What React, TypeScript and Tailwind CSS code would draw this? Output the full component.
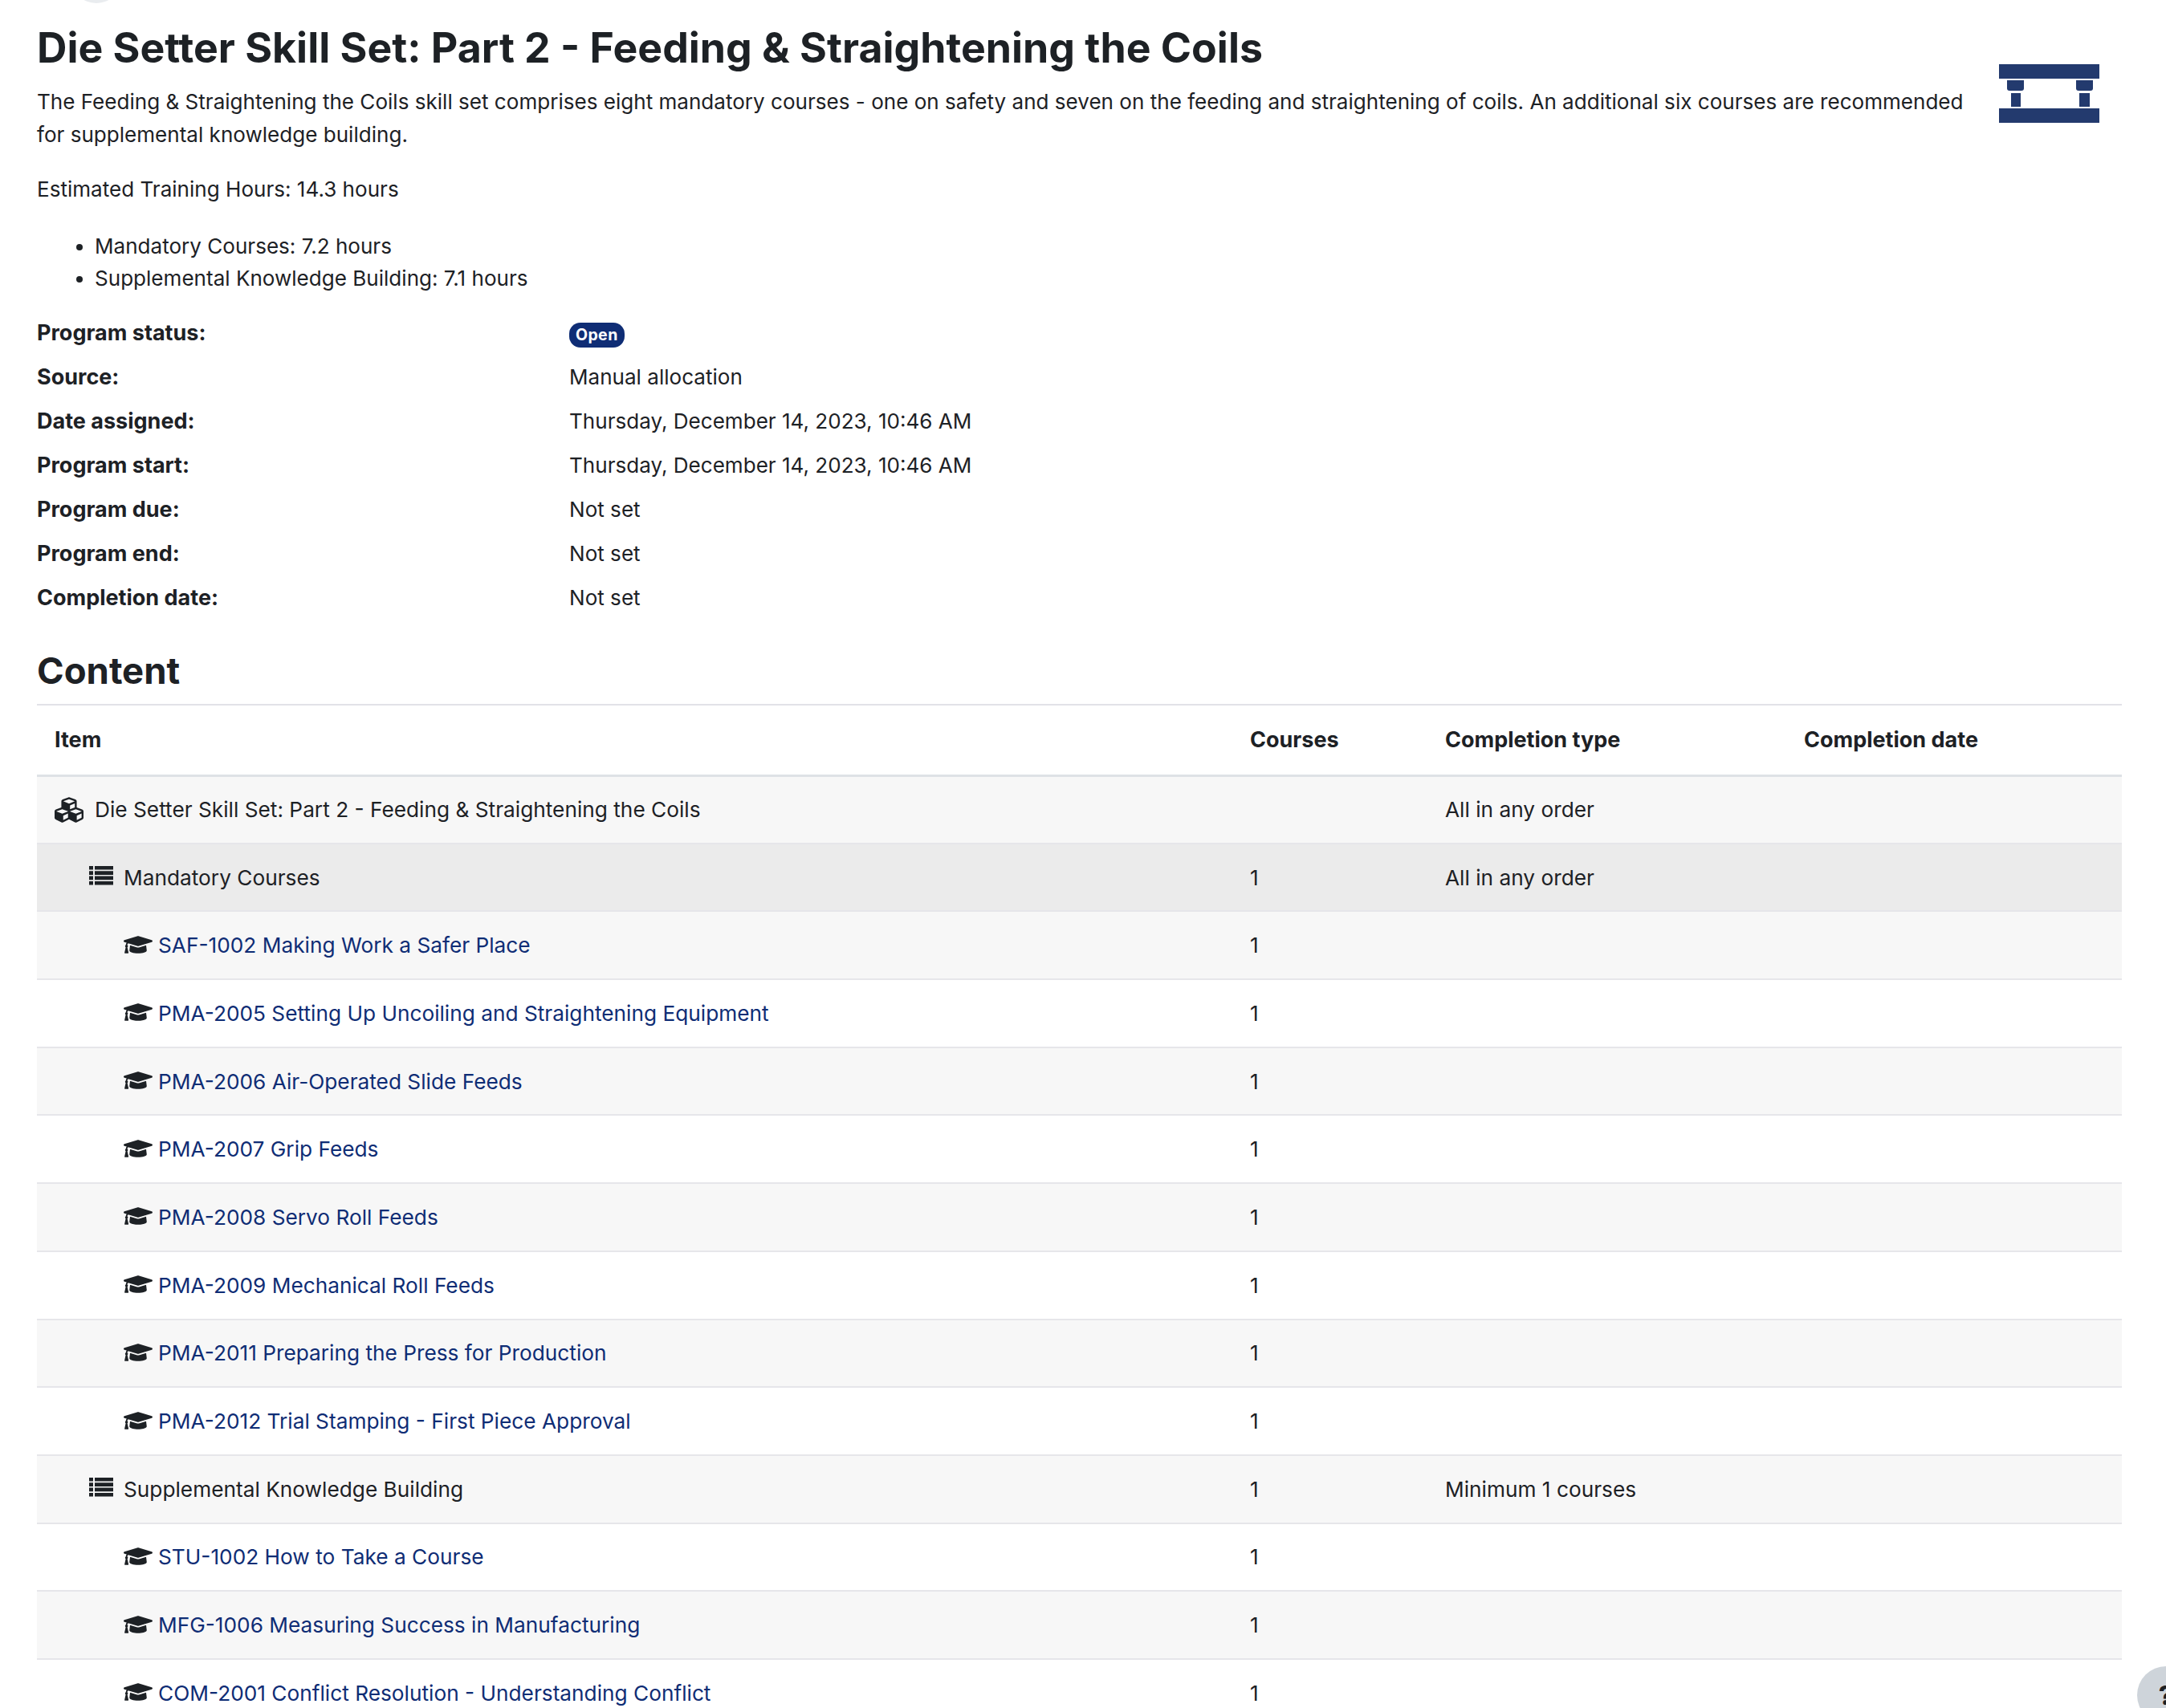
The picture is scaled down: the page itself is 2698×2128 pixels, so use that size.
import { FaCubes, FaGraduationCap } from 'react-icons/fa';

const meta = [
  ['Program status:', null],
  ['Source:', 'Manual allocation'],
  ['Date assigned:', 'Thursday, December 14, 2023, 10:46 AM'],
  ['Program start:', 'Thursday, December 14, 2023, 10:46 AM'],
  ['Program due:', 'Not set'],
  ['Program end:', 'Not set'],
  ['Completion date:', 'Not set'],
];

type Row = {
  kind: 'set' | 'group' | 'course';
  name: string;
  courses?: string;
  completion?: string;
};

const rows: Row[] = [
  { kind: 'set', name: 'Die Setter Skill Set: Part 2 - Feeding & Straightening the Coils', completion: 'All in any order' },
  { kind: 'group', name: 'Mandatory Courses', courses: '1', completion: 'All in any order' },
  { kind: 'course', name: 'SAF-1002 Making Work a Safer Place', courses: '1' },
  { kind: 'course', name: 'PMA-2005 Setting Up Uncoiling and Straightening Equipment', courses: '1' },
  { kind: 'course', name: 'PMA-2006 Air-Operated Slide Feeds', courses: '1' },
  { kind: 'course', name: 'PMA-2007 Grip Feeds', courses: '1' },
  { kind: 'course', name: 'PMA-2008 Servo Roll Feeds', courses: '1' },
  { kind: 'course', name: 'PMA-2009 Mechanical Roll Feeds', courses: '1' },
  { kind: 'course', name: 'PMA-2011 Preparing the Press for Production', courses: '1' },
  { kind: 'course', name: 'PMA-2012 Trial Stamping - First Piece Approval', courses: '1' },
  { kind: 'group', name: 'Supplemental Knowledge Building', courses: '1', completion: 'Minimum 1 courses' },
  { kind: 'course', name: 'STU-1002 How to Take a Course', courses: '1' },
  { kind: 'course', name: 'MFG-1006 Measuring Success in Manufacturing', courses: '1' },
  { kind: 'course', name: 'COM-2001 Conflict Resolution - Understanding Conflict', courses: '1' },
];

function PressLogo() {
  return (
    <svg width="126" height="74" viewBox="0 0 126 74" className="mt-[53px] mr-[27px] shrink-0" fill="#233a6e">
      <rect x="0" y="0" width="125" height="18" />
      <path d="M10 20h21v10a3 3 0 0 1-3 3H13a3 3 0 0 1-3-3z" />
      <path d="M96 20h21v10a3 3 0 0 1-3 3H99a3 3 0 0 1-3-3z" />
      <rect x="15" y="36" width="12" height="17" />
      <rect x="100" y="36" width="13" height="17" />
      <rect x="0" y="55" width="125" height="18" />
    </svg>
  );
}

function ListIcon() {
  return (
    <svg width="30" height="24" viewBox="0 0 30 24" className="mr-[13px] shrink-0 -translate-y-[2px]" fill="currentColor">
      <path d="M0 0h5v4.6H0zM7 0h23v4.6H7zM0 6.3h5v4.6H0zM7 6.3h23v4.6H7zM0 12.6h5v4.6H0zM7 12.6h23v4.6H7zM0 18.9h5v4.6H0zM7 18.9h23v4.6H7z" />
    </svg>
  );
}

function ItemCell({ row }: { row: Row }) {
  if (row.kind === 'set') {
    return (
      <div className="flex items-center">
        <FaCubes className="mr-[14px] h-[36px] w-[36px] shrink-0" />
        <span>{row.name}</span>
      </div>
    );
  }
  if (row.kind === 'group') {
    return (
      <div className="flex items-center pl-[43px]">
        <ListIcon />
        <span>{row.name}</span>
      </div>
    );
  }
  return (
    <div className="flex items-center pl-[86px]">
      <FaGraduationCap className="mr-[7px] h-[36px] w-[36px] shrink-0 -translate-y-[1px]" />
      <a className="text-[#0f2d75]">{row.name}</a>
    </div>
  );
}

export default function App() {
  return (
    <div className="relative h-[2128px] overflow-hidden bg-white font-['Inter',sans-serif] text-[26.07px] leading-[41px] text-[#1d2125]">
      <div className="absolute left-[88px] top-[-60px] h-[64px] w-[64px] rounded-full bg-[#e9ecef]" />

      <div className="px-[46px] pr-[55px] pt-[27px]">
        <div className="flex items-start justify-between">
          <div className="w-[2420px]">
            <h2 className="mb-[15px] text-[51.8px] font-bold leading-[64px]">
              Die Setter Skill Set: Part 2 - Feeding &amp; Straightening the Coils
            </h2>
            <p>
              The Feeding &amp; Straightening the Coils skill set comprises eight mandatory courses - one on safety and seven on the feeding and straightening of coils. An additional six courses are recommended for supplemental knowledge building.
            </p>
          </div>
          <PressLogo />
        </div>

        <p className="mt-[27px]">Estimated Training Hours: 14.3 hours</p>
        <ul className="mt-[31px] list-disc pl-[72px]">
          <li className="leading-[40px]">Mandatory Courses: 7.2 hours</li>
          <li className="leading-[40px]">Supplemental Knowledge Building: 7.1 hours</li>
        </ul>

        <dl className="mt-[20px] grid grid-cols-[663px_1fr] auto-rows-[55px] items-center">
          {meta.map(([label, value]) => (
            <div key={label} className="contents">
              <dt className="text-[27px] font-bold">{label}</dt>
              <dd>
                {value ?? (
                  <span className="inline-block rounded-[14px] bg-[#0f2d75] px-[8px] text-[19.5px] font-bold leading-[31px] tracking-[0.4px] text-white">
                    Open
                  </span>
                )}
              </dd>
            </div>
          ))}
        </dl>

        <h3 className="mt-[32px] text-[45.5px] font-bold leading-[64px]">Content</h3>

        <table className="mt-[9px] w-full table-fixed border-collapse text-[26.25px]">
          <colgroup>
            <col />
            <col className="w-[243px]" />
            <col className="w-[447px]" />
            <col className="w-[418px]" />
          </colgroup>
          <thead>
            <tr className="h-[88px] border-t-2 border-b-[3px] border-t-[#e2e2e8] border-b-[#dee2e6] text-left text-[27px]">
              <th className="px-[22px] font-bold">Item</th>
              <th className="px-[22px] font-bold">Courses</th>
              <th className="px-[22px] font-bold">Completion type</th>
              <th className="px-[22px] font-bold">Completion date</th>
            </tr>
          </thead>
          <tbody>
            {rows.map((row, i) => (
              <tr
                key={row.name}
                className={`h-[84.7px] border-b-2 border-[#e6e6ea] ${
                  i === 1 ? 'bg-[#ebebeb]' : i % 2 === 0 ? 'bg-[#f7f7f7]' : 'bg-white'
                }`}
              >
                <td className="px-[22px]">
                  <ItemCell row={row} />
                </td>
                <td className="px-[22px]">{row.courses}</td>
                <td className="px-[22px]">{row.completion}</td>
                <td className="px-[22px]" />
              </tr>
            ))}
          </tbody>
        </table>
      </div>

      <div className="absolute left-[2662px] top-[2076px] flex h-[72px] w-[72px] items-center justify-center rounded-full bg-[#ced4da] text-[32px] font-extrabold">
        ?
      </div>
    </div>
  );
}
